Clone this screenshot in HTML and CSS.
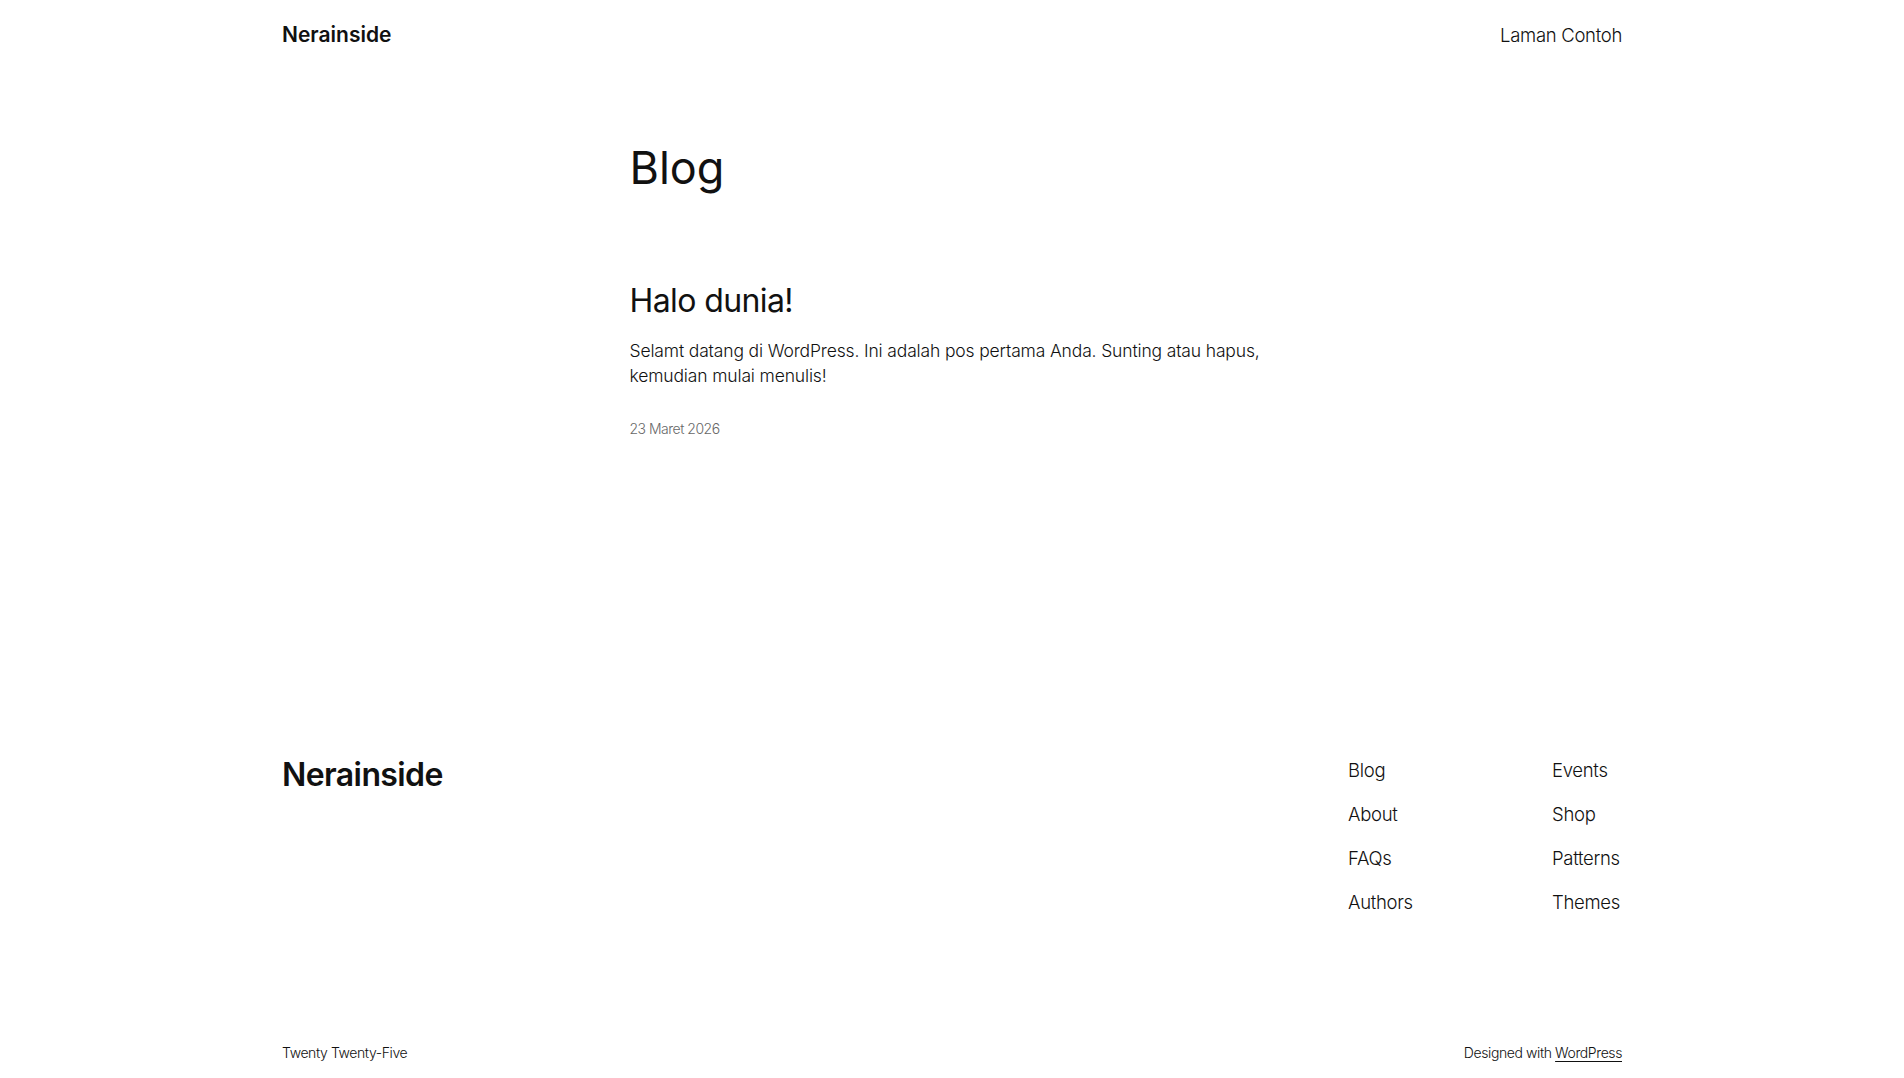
FILE: index.html
```html
<!DOCTYPE html>
<html lang="id">
  <head>
    <meta charset="utf-8">
    <meta name="viewport" content="width=device-width, initial-scale=1.0"/>
    <title>Blog – Nerainside</title>
    <link rel="stylesheet" href="styles.css">
  </head>

  <body>
    <div class='wide'>
      <header class='site-header'>
        <a class='site-title' href='#'>Nerainside</a>
        <nav class='header-nav'>
          <a href='#'>Laman Contoh</a>
        </nav>
      </header>
    </div>

    <main class='content'>
      <h1 class='page-title'>Blog</h1>

      <!-- Posts -->
      <article class='post'>
        <h2 class='post-title'><a href='#'>Halo dunia!</a></h2>
        <p class='post-excerpt'>Selamt datang di WordPress. Ini adalah pos pertama Anda. Sunting atau hapus, kemudian mulai menulis!</p>
        <time class='post-date' datetime='2026-03-23'>23 Maret 2026</time>
      </article>
    </main>

    <div class='wide'>
      <footer class='site-footer'>
        <div class='footer-top'>
          <a class='footer-title' href='#'>Nerainside</a>
          <nav class='footer-nav'>
            <a href='#'>Blog</a>
            <a href='#'>Events</a>
            <a href='#'>About</a>
            <a href='#'>Shop</a>
            <a href='#'>FAQs</a>
            <a href='#'>Patterns</a>
            <a href='#'>Authors</a>
            <a href='#'>Themes</a>
          </nav>
        </div>
        <div class='footer-bottom'>
          <span>Twenty Twenty-Five</span>
          <span>Designed with <a class='credit-link' href='#'>WordPress</a></span>
        </div>
      </footer>
    </div>
  </body>
</html>
```

FILE: styles.css
```css
* {
  margin: 0;
  padding: 0;
  box-sizing: border-box;
}
html, body {
  overflow-x: hidden;
}
body {
  font-family: 'Inter', 'Liberation Sans', sans-serif;
  font-weight: 300;
  color: #111111;
  background-color: #ffffff;
}
a {
  color: inherit;
  text-decoration: none;
}
.wide {
  margin: 0 auto;
  max-width: 1340px;
}

/* Header */
.site-header {
  display: flex;
  justify-content: space-between;
  align-items: center;
  padding: 21px 0 20px;
}
.site-title {
  font-size: 21px;
  line-height: 28px;
  font-weight: 600;
  letter-spacing: 0;
}
.header-nav a {
  font-size: 18.5px;
  line-height: 28px;
  letter-spacing: -0.3px;
}

/* Content */
.content {
  margin: 0 auto;
  max-width: 645px;
  padding: 72px 0 156px;
}
.page-title {
  font-size: 45px;
  line-height: 54px;
  font-weight: 400;
  letter-spacing: 0;
}
.post {
  margin-top: 87px;
}
.post-title {
  font-size: 32px;
  line-height: 38px;
  font-weight: 400;
  letter-spacing: -0.6px;
}
.post-excerpt {
  margin-top: 18px;
  font-size: 17.5px;
  line-height: 25px;
  letter-spacing: -0.15px;
}
.post-date {
  display: block;
  margin-top: 31px;
  font-size: 14px;
  line-height: 20px;
  color: #686868;
  letter-spacing: -0.5px;
}

/* Footer */
.site-footer {
  padding: 160px 0 40px;
}
.footer-top {
  display: flex;
  justify-content: space-between;
  align-items: flex-start;
}
.footer-title {
  font-size: 32px;
  line-height: 40px;
  font-weight: 600;
  letter-spacing: -0.6px;
}
.footer-nav {
  display: grid;
  grid-template-columns: 204px 70px;
  row-gap: 20px;
  padding-top: 3px;
}
.footer-nav a {
  font-size: 18.5px;
  line-height: 24px;
  white-space: nowrap;
  letter-spacing: -0.3px;
}
.footer-bottom {
  display: flex;
  justify-content: space-between;
  margin-top: 129px;
  font-size: 14px;
  line-height: 20px;
  letter-spacing: -0.4px;
}
.credit-link {
  text-decoration: underline;
  text-underline-offset: 3px;
}
```
